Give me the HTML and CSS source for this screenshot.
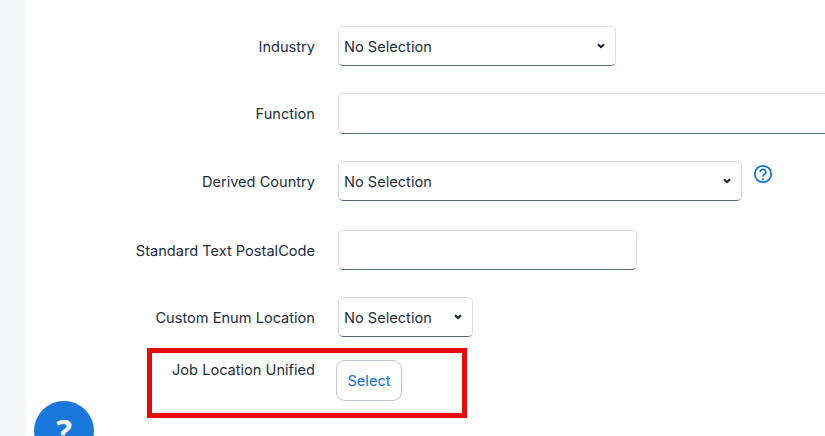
FILE: index.html
```html
<!DOCTYPE html>
<html lang="en">
<head>
<meta charset="utf-8">
<title>Job Search Filters</title>
<link rel="stylesheet" href="styles.css">
</head>
<body>
<div class="page">
  <aside class="sidebar"></aside>
  <main class="form">
    <div class="row row-a">
      <label class="label">Industry</label>
      <select class="control dropdown select-industry"><option>No Selection</option></select>
    </div>
    <div class="row row-b">
      <label class="label">Function</label>
      <input class="control input-function" type="text">
    </div>
    <div class="row row-c">
      <label class="label">Derived Country</label>
      <div class="field-with-help">
        <select class="control dropdown select-country"><option>No Selection</option></select>
        <svg class="help" viewBox="0 0 20 20" width="20" height="20" aria-hidden="true">
          <circle cx="10" cy="10" r="8.2" fill="none" stroke="#0b6fe0" stroke-width="1.8"/>
          <path d="M7.1 8a2.9 2.7 0 1 1 4.4 2.3c-1 .6-1.5 1.1-1.5 2.2" fill="none" stroke="#0b6fe0" stroke-width="1.7"/>
          <circle cx="10" cy="15" r="1.1" fill="#0b6fe0"/>
        </svg>
      </div>
    </div>
    <div class="row row-d">
      <label class="label">Standard Text PostalCode</label>
      <input class="control input-postal" type="text">
    </div>
    <div class="row row-e">
      <label class="label">Custom Enum Location</label>
      <select class="control dropdown select-enum"><option>No Selection</option></select>
    </div>
    <div class="row row-f">
      <label class="label label-top">Job Location Unified</label>
      <button class="select-btn" type="button">Select</button>
    </div>
  </main>
</div>
<div class="highlight"></div>
<button class="fab" type="button" aria-label="Help">?</button>
</body>
</html>
```
FILE: styles.css
```css
* { box-sizing: border-box; }
html, body { margin: 0; height: 100%; overflow: hidden; background: #fff; }
body { font-family: Inter, "Noto Sans", sans-serif; font-size: 14.6px; color: #1d2d3e; }
.page { display: flex; height: 436px; }
.sidebar { flex: 0 0 27px; background: #f5f6f7; }
.form { flex: 1; padding-top: 26px; min-width: 0; }
.row { display: flex; gap: 23px; align-items: flex-start; }
.row-b { margin-top: 27px; }
.row-c { margin-top: 27px; }
.row-d { margin-top: 29px; }
.row-e { margin-top: 27px; }
.row-f { margin-top: 23px; gap: 21px; }
.label { flex: 0 0 288px; text-align: right; padding-top: 11px; line-height: 20px; }
.label-top { padding-top: 0; }
.control {
  height: 40px;
  border: 1px solid #d9dde3;
  border-bottom: 1px solid #556b82;
  border-radius: 5px;
  background-color: #fff;
  font: inherit;
  color: #1d2d3e;
  padding: 2px 0 0 5px;
}
.dropdown {
  appearance: none;
  background-image: url("data:image/svg+xml,%3Csvg xmlns='http://www.w3.org/2000/svg' width='8' height='6' viewBox='0 0 8 6'%3E%3Cpath d='M1 1.2 4 4.2 7 1.2' fill='none' stroke='%23121c28' stroke-width='2'/%3E%3C/svg%3E");
  background-repeat: no-repeat;
  background-position: right 10px center;
}
.select-industry { width: 278px; }
.input-function { width: 520px; height: 41px; flex: none; }
.field-with-help { display: flex; gap: 11px; align-items: flex-start; }
.select-country { width: 404px; }
.input-postal { width: 299px; flex: none; }
.select-enum { width: 135px; }
.help { margin-top: 3px; }
.select-btn {
  width: 66px;
  height: 41px;
  border: 1px solid #bcc3ce;
  border-radius: 9px;
  background: #fff;
  color: #0b6fe0;
  font: inherit;
  padding: 1px 0 0;
}
.highlight {
  position: absolute;
  left: 147px;
  top: 348px;
  width: 320px;
  height: 70px;
  border: 5px solid #e60a0a;
}
.fab {
  position: absolute;
  left: 34px;
  top: 401px;
  width: 60px;
  height: 60px;
  border: 0;
  border-radius: 50%;
  background: #1a78dc;
  color: #fff;
  font: 700 33px/46px "Noto Sans", sans-serif;
  padding: 0;
  display: block;
  text-align: center;
}
```
